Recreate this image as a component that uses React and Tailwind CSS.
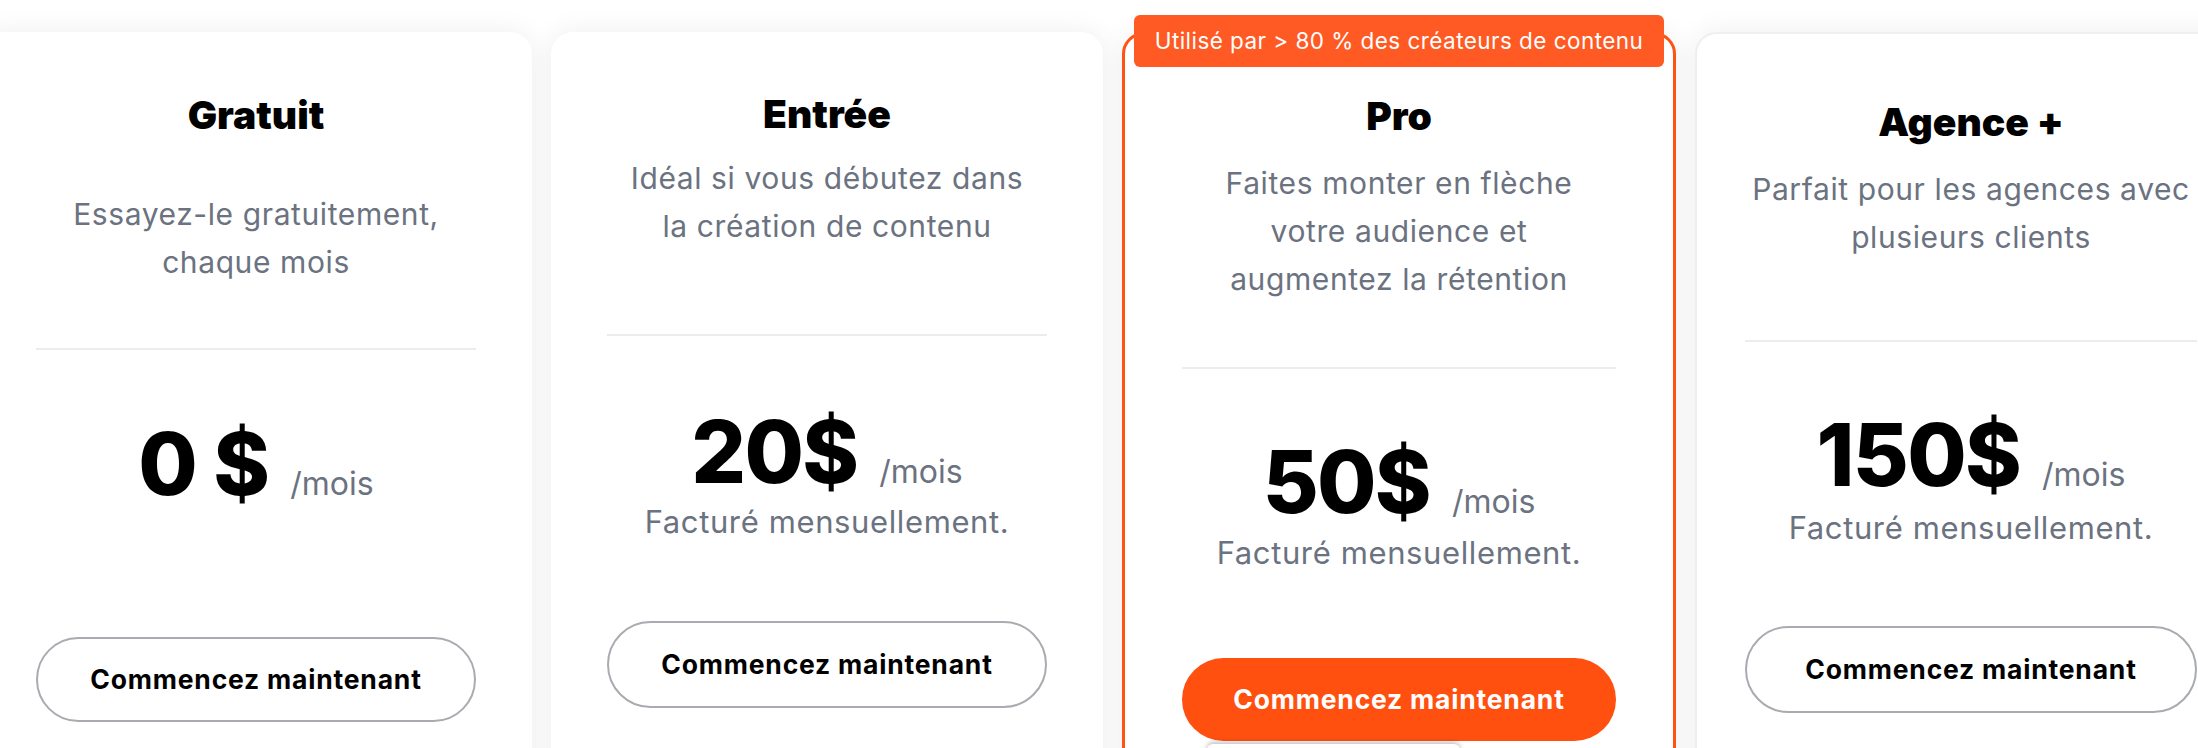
const plans = [
  {
    name: "Gratuit",
    desc: ["Essayez-le gratuitement,", "chaque mois"],
    price: "0 $",
    billed: false,
    card: "w-[552px] pt-[61px] px-[56px] rounded-[22px] shadow-[0_0_28px_rgba(0,0,0,0.07)]",
    descGap: "mt-[53px]",
    divGap: "mt-[62px]",
    priceGap: "mt-[71px]",
    btnGap: "mt-[129px] h-[85px]",
  },
  {
    name: "Entrée",
    desc: ["Idéal si vous débutez dans", "la création de contenu"],
    price: "20$",
    billed: true,
    card: "w-[552px] pt-[60px] px-[56px] rounded-[22px] shadow-[0_0_28px_rgba(0,0,0,0.07)]",
    descGap: "mt-[18px]",
    divGap: "mt-[84px]",
    priceGap: "mt-[73px]",
    billedGap: "mt-[6px]",
    btnGap: "mt-[79px] h-[87px]",
  },
  {
    name: "Pro",
    desc: ["Faites monter en flèche", "votre audience et", "augmentez la rétention"],
    price: "50$",
    billed: true,
    featured: true,
    card: "w-[554px] pt-[59px] px-[57px] rounded-[22px] border-[3px] border-[#ff5316] shadow-[0_0_28px_rgba(0,0,0,0.07)]",
    descGap: "mt-[21px]",
    divGap: "mt-[64px]",
    priceGap: "mt-[70px]",
    billedGap: "mt-[7px]",
    btnGap: "mt-[85px] h-[83px]",
  },
  {
    name: "Agence +",
    desc: ["Parfait pour les agences avec", "plusieurs clients"],
    price: "150$",
    billed: true,
    card: "w-[552px] pt-[66px] px-[48px] rounded-[22px] border-2 border-[#eeeff1] shadow-[0_0_28px_rgba(0,0,0,0.07)]",
    descGap: "mt-[21px]",
    divGap: "mt-[79px]",
    priceGap: "mt-[70px]",
    billedGap: "mt-[9px]",
    btnGap: "mt-[78px] h-[87px]",
  },
];

function PlanCard({ plan }) {
  return (
    <div className={`relative flex h-[900px] shrink-0 flex-col items-center bg-white ${plan.card}`}>
      {plan.featured && (
        <div className="absolute -top-[20px] left-[9px] right-[9px] flex h-[52px] items-center justify-center rounded-[6px] bg-[#ff5a23] text-[22.5px] tracking-[0.02em] text-white">
          Utilisé par &gt; 80 % des créateurs de contenu
        </div>
      )}

      <h2 className="text-[39px] font-black leading-[44px] text-black">{plan.name}</h2>

      <div className={`${plan.descGap} flex flex-col items-center text-[30px] leading-[48px] tracking-[0.02em] text-[#6b7280]`}>
        {plan.desc.map((line) => (
          <span key={line} className="whitespace-nowrap">
            {line}
          </span>
        ))}
      </div>

      <div className={`${plan.divGap} h-[2px] w-full shrink-0 bg-[#ececee]`} />

      {/* Price */}
      <div className={`${plan.priceGap} flex items-baseline`}>
        <span className="whitespace-pre text-[86px] font-extrabold leading-[86px] tracking-[-0.02em] text-black">{plan.price}</span>
        <span className="ml-[22px] text-[32px] text-[#6b7280]">/mois</span>
      </div>

      {plan.billed && (
        <p className={`${plan.billedGap} text-[31px] leading-[40px] tracking-[0.02em] text-[#6b7280]`}>Facturé mensuellement.</p>
      )}

      <button
        className={`${plan.btnGap} flex w-full shrink-0 items-center justify-center rounded-full text-[26.5px] font-bold tracking-[0.03em] ${
          plan.featured ? "bg-[#ff5010] text-white" : "border-2 border-[#a9abb0] bg-white text-black"
        }`}
      >
        Commencez maintenant
      </button>

      {plan.featured && (
        <div className="mt-[3px] ml-[25px] h-[12px] w-[253px] self-start rounded-t-[6px] bg-white shadow-[0_-2px_5px_rgba(0,0,0,0.25)]" />
      )}
    </div>
  );
}

export default function App() {
  return (
    <div className="h-[748px] w-[2198px] overflow-hidden bg-white font-['Inter',sans-serif]">
      <div className="-ml-[20px] flex gap-[19px] pt-[32px]">
        {plans.map((plan) => (
          <PlanCard key={plan.name} plan={plan} />
        ))}
      </div>
    </div>
  );
}
